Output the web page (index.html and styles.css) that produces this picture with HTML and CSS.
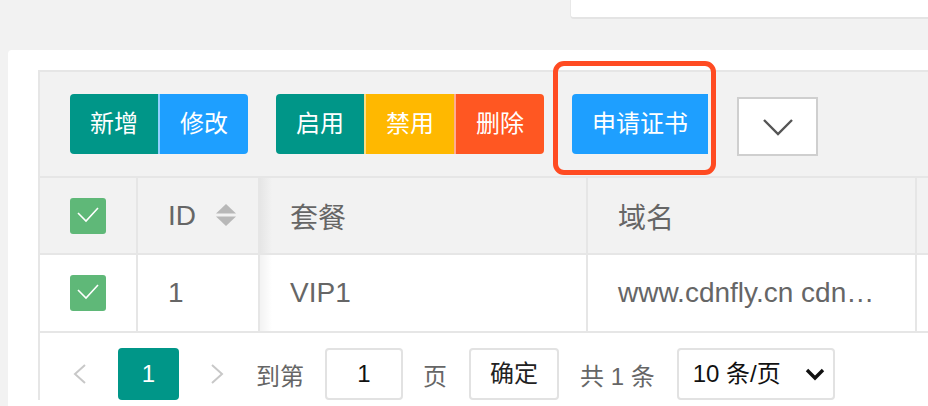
FILE: index.html
```html
<!DOCTYPE html>
<html lang="zh-CN">
<head>
<meta charset="utf-8" />
<title>证书管理</title>
<link rel="stylesheet" href="styles.css">
</head>
<body>
	<div class="topbar">
		<div class="topCard"></div>
	</div>

	<div class="card">
		<div class="table">
			<div class="toolbar">
				<div class="btnGroup">
					<span class="btn teal">新增</span>
					<span class="btn blue">修改</span>
				</div>
				<div class="btnGroup">
					<span class="btn teal">启用</span>
					<span class="btn yellow">禁用</span>
					<span class="btn red">删除</span>
				</div>
				<div class="btnGroup hlWrap">
					<span class="btn blue">申请证书</span>
					<span class="hl"></span>
				</div>
				<div class="moreBox">
					<svg width="30" height="18" viewBox="0 0 30 18">
						<path d="M1 2 L15 16 L29 2" fill="none" stroke="#555" stroke-width="2.4" />
					</svg>
				</div>
			</div>

			<div class="row head">
				<div class="cell checkCell">
					<span class="check">
						<svg width="36" height="36" viewBox="0 0 36 36">
							<path d="M8 15 L16 23 L28 10" fill="none" stroke="#fff" stroke-width="1.6" />
						</svg>
					</span>
				</div>
				<div class="cell idCell">ID
					<svg class="sort" width="20" height="23" viewBox="0 0 20 23">
						<polygon points="0,9.5 10,0 20,9.5" fill="#b8b8b8" />
						<polygon points="0,12.5 10,22 20,12.5" fill="#b8b8b8" />
					</svg>
				</div>
				<div class="cell shade">套餐</div>
				<div class="cell">域名</div>
				<div class="cell"></div>
			</div>

			<div class="row body">
				<div class="cell checkCell">
					<span class="check">
						<svg width="36" height="36" viewBox="0 0 36 36">
							<path d="M8 15 L16 23 L28 10" fill="none" stroke="#fff" stroke-width="1.6" />
						</svg>
					</span>
				</div>
				<div class="cell">1</div>
				<div class="cell shade">VIP1</div>
				<div class="cell">www.cdnfly.cn cdn…</div>
				<div class="cell"></div>
			</div>

			<div class="pager">
				<span class="arrow">
					<svg width="14" height="20" viewBox="0 0 14 20">
						<path d="M12 1 L2 10 L12 19" fill="none" stroke="#c8c8c8" stroke-width="2" />
					</svg>
				</span>
				<span class="pageCurrent">1</span>
				<span class="arrow">
					<svg width="14" height="20" viewBox="0 0 14 20">
						<path d="M2 1 L12 10 L2 19" fill="none" stroke="#c8c8c8" stroke-width="2" />
					</svg>
				</span>
				<span class="pagerText gotoLabel">到第</span>
				<span class="pagerInput">1</span>
				<span class="pagerText pageLabel">页</span>
				<span class="pagerBtn">确定</span>
				<span class="pagerText countLabel">共 1 条</span>
				<span class="pagerSelect">10 条/页
					<svg width="20" height="14" viewBox="0 0 20 14">
						<path d="M2 3 L10 11 L18 3" fill="none" stroke="#111" stroke-width="3.4" />
					</svg>
				</span>
			</div>
		</div>
	</div>
</body>
</html>
```

FILE: styles.css
```css
html {
	font-family: "Liberation Sans", "Noto Sans CJK SC", sans-serif;
}

body {
	margin: 0;
	height: 406px;
	overflow: hidden;
	background-color: #f2f2f2;
}

.topbar {
	height: 50px;
	display: flex;
	justify-content: flex-end;
}

.topCard {
	width: 357px;
	height: 17px;
	background-color: #fff;
	border-bottom: 2px solid #e4e4e4;
	border-left: 1px solid #e8e8e8;
	border-radius: 0 0 0 4px;
}

.card {
	margin-left: 8px;
	width: 960px;
	height: 356px;
	padding: 20px 0 0 30px;
	background-color: #fff;
	border-radius: 4px 0 0 0;
}

.table {
	border-top: 2px solid #e6e6e6;
	border-left: 2px solid #e6e6e6;
}

/* toolbar */
.toolbar {
	display: flex;
	align-items: flex-start;
	height: 60px;
	padding: 22px 30px;
	background-color: #f2f2f2;
	border-bottom: 2px solid #e6e6e6;
}

.btnGroup {
	display: flex;
	margin-right: 28px;
}

.btn {
	height: 60px;
	line-height: 60px;
	padding: 0 20px;
	color: #fff;
	font-size: 24px;
	white-space: nowrap;
}

.btn + .btn {
	border-left: 2px solid rgba(255, 255, 255, .5);
}

.btn:first-child {
	border-radius: 4px 0 0 4px;
}

.btn:last-child {
	border-radius: 0 4px 4px 0;
}

.btn:only-child {
	border-radius: 4px;
}

.teal {
	background-color: #009688;
}

.blue {
	background-color: #1e9fff;
}

.yellow {
	background-color: #ffb800;
}

.red {
	background-color: #ff5722;
}

.hlWrap {
	position: relative;
	margin-right: 29px;
}

.hl {
	position: absolute;
	left: -19px;
	right: -8px;
	top: -33px;
	bottom: -21px;
	border: 5px solid #ff4b22;
	border-radius: 11px;
}

.moreBox {
	display: flex;
	align-items: center;
	justify-content: center;
	box-sizing: border-box;
	width: 81px;
	height: 59px;
	margin-top: 3px;
	background-color: #fff;
	border: 2px solid #cfcfcf;
}

/* rows */
.row {
	display: grid;
	grid-template-columns: 98px 122px 328px 329px 1fr;
	border-bottom: 2px solid #e6e6e6;
	color: #666;
	font-size: 28px;
}

.head {
	height: 75px;
	background-color: #f2f2f2;
}

.body {
	height: 76px;
	background-color: #fff;
}

.cell {
	display: flex;
	align-items: center;
	min-width: 0;
	padding: 0 30px;
	border-right: 2px solid #e6e6e6;
	white-space: nowrap;
}

.idCell {
	overflow: visible;
}

.checkCell {
	justify-content: center;
	padding: 0;
}

.shade {
	background-image: linear-gradient(to right, rgba(0, 0, 0, .05), rgba(0, 0, 0, 0) 12px);
}

.check {
	display: block;
	width: 36px;
	height: 36px;
	background-color: #5fb878;
	border-radius: 3px;
}

.check svg {
	display: block;
}

.sort {
	flex-shrink: 0;
	margin-left: 20px;
}

/* pager */
.pager {
	display: flex;
	align-items: center;
	height: 52px;
	padding: 15px 0 0 20px;
	font-size: 24px;
}

.arrow {
	display: flex;
	justify-content: center;
	width: 40px;
}

.pageCurrent {
	width: 61px;
	height: 52px;
	line-height: 52px;
	margin: 0 18px;
	text-align: center;
	color: #fff;
	background-color: #009688;
	border-radius: 4px;
}

.pagerText {
	color: #666;
	white-space: nowrap;
}

.gotoLabel {
	margin-left: 19px;
}

.pageLabel {
	margin-left: 20px;
}

.countLabel {
	margin-left: 21px;
}

.pagerInput,
.pagerBtn,
.pagerSelect {
	box-sizing: border-box;
	height: 52px;
	line-height: 48px;
	border: 2px solid #e2e2e2;
	border-radius: 4px;
	background-color: #fff;
}

.pagerInput {
	width: 78px;
	margin-left: 21px;
	text-align: center;
	color: #111;
}

.pagerBtn {
	width: 90px;
	margin-left: 22px;
	text-align: center;
	color: #222;
}

.pagerSelect {
	display: flex;
	align-items: center;
	justify-content: space-between;
	width: 158px;
	margin-left: 22px;
	padding: 0 8px 0 14px;
	color: #111;
	white-space: nowrap;
}
```
